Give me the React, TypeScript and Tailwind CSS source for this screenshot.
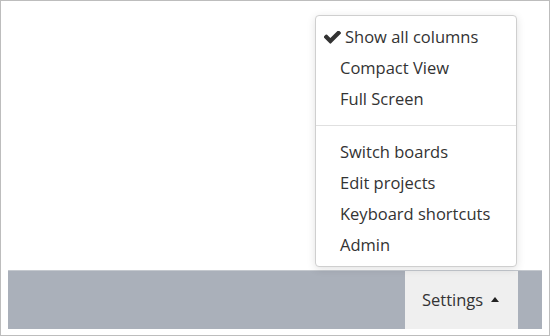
const font = { fontFamily: '"Open Sans", "Noto Sans", sans-serif' };

function Check() {
  return (
    <svg viewBox="140 400 1532 1130" className="h-[13px] w-[17px] fill-[#333]">
      <path d="M1671 566q0 40-28 68l-724 724-136 136q-28 28-68 28t-68-28l-136-136-362-362q-28-28-28-68t28-68l136-136q28-28 68-28t68 28l294 295 656-657q28-28 68-28t68 28l136 136q28 28 28 68z" />
    </svg>
  );
}

const topItems = ['Compact View', 'Full Screen'];
const bottomItems = ['Switch boards', 'Edit projects', 'Keyboard shortcuts', 'Admin'];

export default function App() {
  return (
    <div
      className="relative flex h-[336px] w-[550px] flex-col border border-[#bdbdbd] bg-white text-[#333]"
      style={font}
    >
      <div className="flex-1" />
      <div className="mx-[7px] mb-[6px] flex h-[59px] border-t border-[#c4c8ce] bg-[#aab0ba]">
        <button className="ml-auto mr-[24px] flex w-[113px] items-center bg-[#efefef] pl-[17px] text-[16.5px] text-[#333]">
          Settings
          <span className="ml-[8px] mt-[-1px] h-0 w-0 border-x-[4px] border-b-[5px] border-x-transparent border-b-[#222]" />
        </button>
      </div>

      <div className="absolute right-[32px] top-[14px] w-[202px] rounded-[4px] border border-[#cfcfcf] bg-white pb-[5px] pt-[6px] text-[16.5px] shadow-[0_2px_8px_rgba(0,0,0,0.12)]">
        <div className="flex h-[31px] items-center pl-[8px]">
          <Check />
          <span className="ml-[4px]">Show all columns</span>
        </div>
        {topItems.map((t) => (
          <div key={t} className="flex h-[31px] items-center pl-[24px]">
            {t}
          </div>
        ))}
        <div className="mb-[11px] mt-[10px] border-t border-[#e0e0e0]" />
        {bottomItems.map((t) => (
          <div key={t} className="flex h-[31px] items-center pl-[24px]">
            {t}
          </div>
        ))}
      </div>
    </div>
  );
}
